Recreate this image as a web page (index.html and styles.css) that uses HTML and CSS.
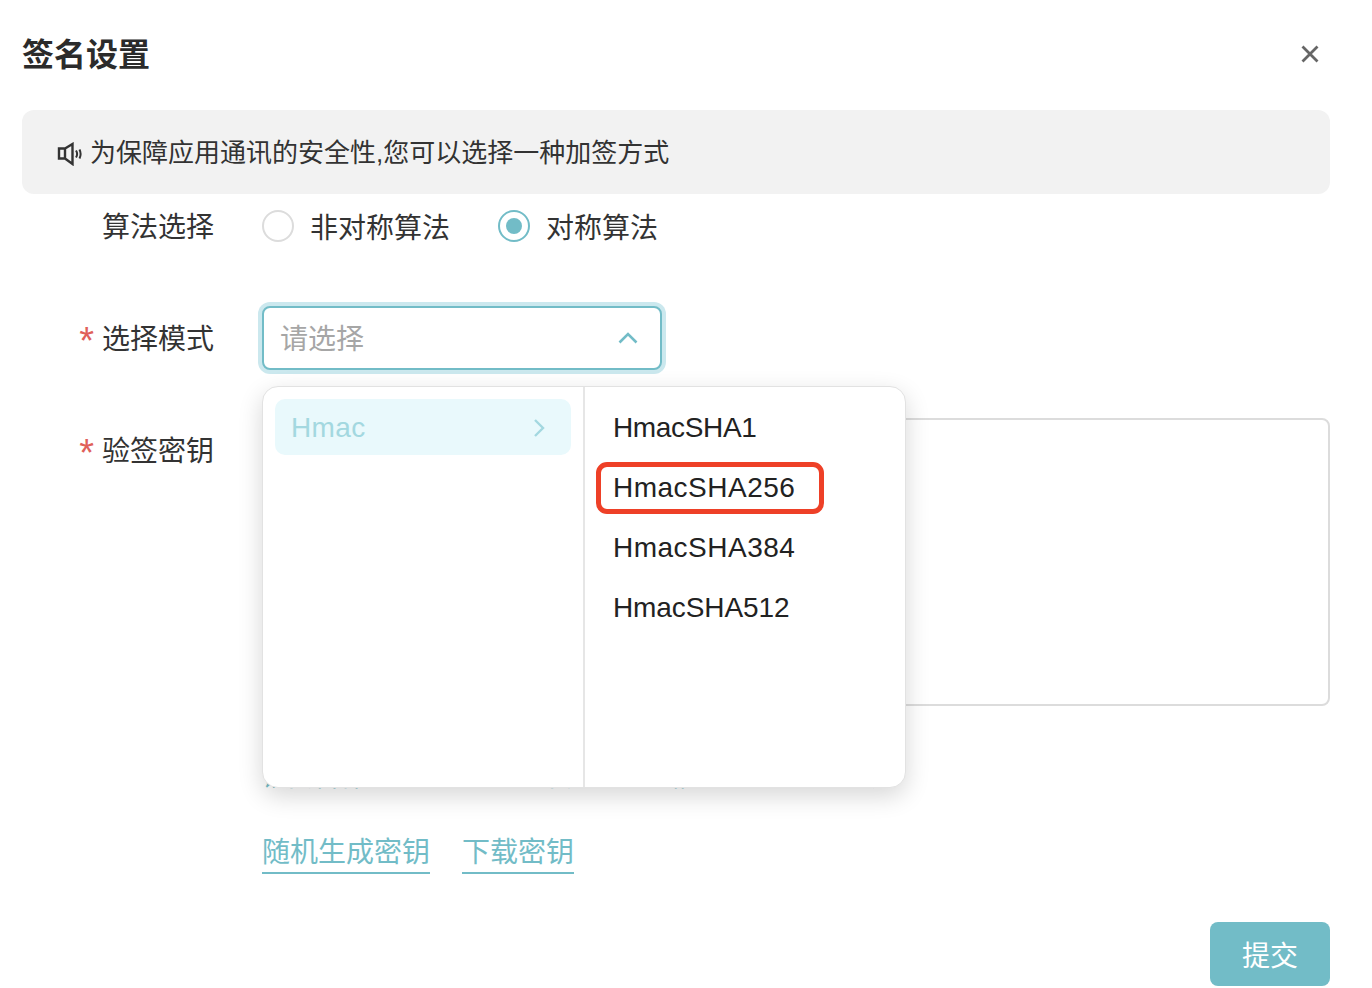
FILE: index.html
```html
<!DOCTYPE html>
<html lang="zh-CN">
<head>
<meta charset="utf-8">
<title>签名设置</title>
<link rel="stylesheet" href="styles.css">
</head>
<body>
<div class="dialog">
  <header class="head">
    <h1 class="title">签名设置</h1>
    <svg class="close" width="18" height="18" viewBox="0 0 18 18"><path d="M1.500 1.500 16.500 16.500M16.500 1.500 1.500 16.500" fill="none" stroke="#666" stroke-width="2.800"/></svg>
  </header>
  <div class="notice">
    <svg class="speaker" width="26" height="24" viewBox="0 0 26 24"><path d="M2 6.500h6v10H2zM8 6.500 15.500 2v20L8 16.500" fill="none" stroke="#333" stroke-width="2.400"/><path d="M19 8.500c1.300 2 1.300 5 0 7M22.500 7.500c1.500 3 1.500 6 0 9" fill="none" stroke="#333" stroke-width="2"/></svg>
    <span class="notice-text">为保障应用通讯的安全性,您可以选择一种加签方式</span>
  </div>
  <form class="form">
    <div class="row">
      <label class="label">算法选择</label>
      <div class="radios">
        <span class="radio"><i class="dot"></i>非对称算法</span>
        <span class="radio on"><i class="dot"></i>对称算法</span>
      </div>
    </div>
    <div class="row">
      <label class="label req">选择模式</label>
      <div class="select-wrap">
        <div class="select">
          <span class="placeholder">请选择</span>
          <svg width="20" height="12" viewBox="0 0 20 12"><path d="M1.500 10.500 10 2l8.500 8.500" fill="none" stroke="#72bcc7" stroke-width="2.600"/></svg>
        </div>
        <div class="popup">
          <div class="pane left">
            <div class="cat"><span>Hmac</span><svg width="12" height="20" viewBox="0 0 12 20"><path d="M2 2l8 8-8 8" fill="none" stroke="#a3d8e0" stroke-width="2.400"/></svg></div>
          </div>
          <div class="pane right">
            <div class="opt tight">HmacSHA1</div>
            <div class="opt">HmacSHA256<span class="mark"></span></div>
            <div class="opt">HmacSHA384</div>
            <div class="opt tight-sm">HmacSHA512</div>
          </div>
        </div>
      </div>
    </div>
    <div class="row">
      <label class="label req">验签密钥</label>
      <div class="area-col">
        <div class="area"></div>
        <p class="hint"><span>请妥善保</span><span>您的密钥以防泄露</span><span>系统</span></p>
        <div class="links"><a class="link">随机生成密钥</a><a class="link">下载密钥</a></div>
      </div>
    </div>
    <div class="actions"><button type="button" class="submit">提交</button></div>
  </form>
</div>
</body>
</html>
```
FILE: styles.css
```css
* { box-sizing: border-box; }
html, body { margin: 0; height: 100%; overflow: hidden; background: #fff; }
body { font-family: "Liberation Sans", "Noto Sans CJK SC", sans-serif; color: #333; }
.dialog { width: 1372px; padding: 0 42px 0 22px; }
.head { height: 110px; display: flex; justify-content: space-between; align-items: center; padding-right: 11px; padding-bottom: 2px; }
.title { margin: 2px 0 0; font-size: 32px; line-height: 44px; font-weight: 700; color: #2b2b2b; }
.notice { height: 84px; background: #f2f2f2; border-radius: 12px; display: flex; align-items: center; padding-left: 35px; gap: 8px; font-size: 26px; color: #333; }
.speaker { flex: none; margin-top: 4px; }
.notice-text { margin-bottom: 4px; margin-left: -1px; }
.form { display: flex; flex-direction: column; gap: 48px; }
.row { display: flex; align-items: flex-start; }
.label { width: 192px; height: 64px; flex: none; line-height: 68px; font-size: 28px; text-align: right; color: #333; }
.req::before { content: "*"; color: #e0605a; margin-right: 8px; font-family: "Liberation Sans", sans-serif; font-size: 38px; line-height: 0; vertical-align: -5px; }
.radios { margin-left: 48px; height: 64px; display: flex; align-items: center; gap: 48px; }
.radio { display: flex; align-items: center; gap: 16px; font-size: 28px; color: #333; }
.dot { width: 32px; height: 32px; border-radius: 50%; border: 2px solid #dcdcdc; background: #fff; display: flex; align-items: center; justify-content: center; }
.on .dot { border-color: #72bcc7; }
.on .dot::after { content: ""; width: 16px; height: 16px; border-radius: 50%; background: #72bcc7; }
.select-wrap { margin-left: 48px; position: relative; width: 400px; }
.select { height: 64px; border: 2px solid #72bcc7; border-radius: 8px; box-shadow: 0 0 0 4px #cbe8ee; display: flex; align-items: center; justify-content: space-between; padding: 0 22px 0 16px; font-size: 28px; color: #a6a6a6; background: #fff; }
.placeholder { margin-bottom: 2px; }
.popup { position: absolute; left: 0; top: 80px; width: 644px; height: 402px; display: flex; background: #fff; border: 1px solid #e2e2e2; border-radius: 16px; box-shadow: 0 8px 24px rgba(0, 0, 0, .16); z-index: 2; overflow: hidden; }
.pane { height: 100%; }
.left { width: 322px; padding: 12px; border-right: 2px solid #e6e6e6; }
.cat { height: 56px; background: #e9f9fc; border-radius: 10px; display: flex; align-items: center; justify-content: space-between; padding: 2px 26px 0 16px; font-size: 28px; letter-spacing: .4px; color: #a3d8e0; }
.right { flex: 1; padding-top: 10px; }
.opt { position: relative; height: 60px; line-height: 62px; padding-left: 28px; font-size: 28px; letter-spacing: .5px; color: #222; }
.tight { letter-spacing: -.35px; }
.tight-sm { letter-spacing: -.1px; }
.mark { position: absolute; left: 11px; top: 5px; width: 228px; height: 52px; border: 5px solid #ee4027; border-radius: 11px; }
.area-col { margin-left: 48px; flex: 1; display: flex; flex-direction: column; }
.area { height: 288px; border: 2px solid #dcdcdc; border-radius: 8px; }
.hint { margin: 51px 0 0; height: 51px; line-height: 40px; font-size: 26px; color: #72bcc7; display: flex; white-space: nowrap; }
.hint span:nth-child(2) { margin-left: 113px; }
.hint span:nth-child(3) { margin-left: 151px; }
.links { display: flex; gap: 32px; margin-top: 25px; }
.link { font-size: 28px; line-height: 39px; color: #72bcc7; border-bottom: 2px solid #72bcc7; }
.actions { display: flex; justify-content: flex-end; }
.submit { width: 120px; height: 64px; border: 0; border-radius: 8px; background: #72bcc7; color: #fff; font: inherit; font-size: 28px; }
```
